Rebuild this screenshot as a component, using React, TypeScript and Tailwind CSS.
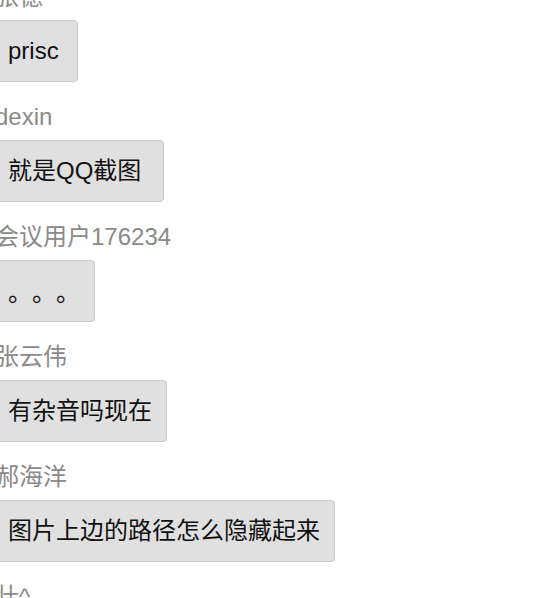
import React from "react";

interface Message {
  name: string;
  text: string;
  extraClass?: string;
}

const messages: Message[] = [
  { name: "张德", text: "prisc", extraClass: "pr-[18px]" },
  { name: "dexin", text: "就是QQ截图", extraClass: "pr-[22px]" },
  {
    name: "会议用户176234",
    text: "。。。",
    extraClass: "pr-[14px] font-['Noto_Sans_CJK_SC'] [text-spacing-trim:space-all]",
  },
  { name: "张云伟", text: "有杂音吗现在", extraClass: "pr-[14px]" },
  { name: "郝海洋", text: "图片上边的路径怎么隐藏起来", extraClass: "pr-[14px]" },
  { name: "壮^", text: "" },
];

export default function App() {
  return (
    <div
      className="h-[598px] w-[552px] overflow-hidden bg-white"
      style={{ fontFamily: '"Liberation Sans", "Noto Sans CJK SC", sans-serif' }}
    >
      <div className="-ml-[5px] -mt-[19px] flex flex-col">
        {messages.map((m, i) => (
          <div key={i} className="flex flex-col items-start pb-[19px]">
            {/* 昵称 */}
            <div className="text-[24px] leading-[32px] text-[#8a8a8a]">{m.name}</div>
            {/* 消息气泡 */}
            {m.text && (
              <div
                className={
                  "mt-[7px] rounded-[4px] border border-[#c9c9c9] bg-[#e0e0e0] py-[12px] pl-[12px] text-[24px] leading-[36px] text-[#111] " +
                  (m.extraClass ?? "")
                }
              >
                {m.text}
              </div>
            )}
          </div>
        ))}
      </div>
    </div>
  );
}
